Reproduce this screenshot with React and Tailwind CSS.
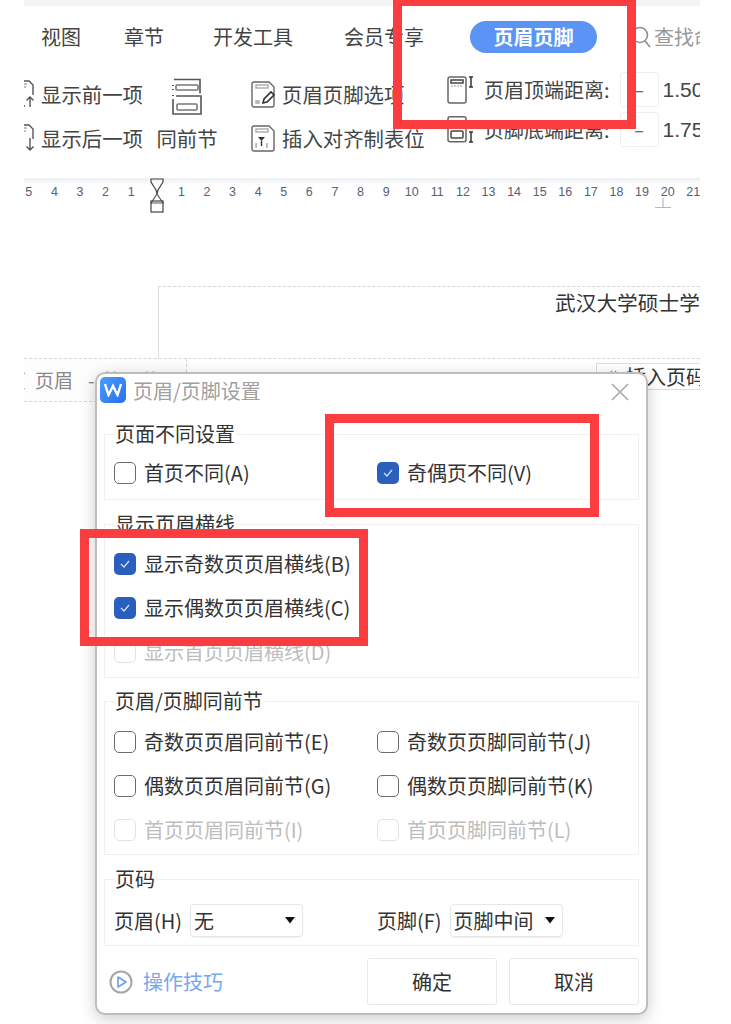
import React from 'react'

const cjk = 'font-["Noto_Sans_CJK_SC","Noto_Sans",sans-serif]'

function PrevIcon({ down }) {
  return (
    <svg width="17" height="28" viewBox="0 0 17 28" fill="none" stroke="#555" strokeWidth="1.4" className="shrink-0">
      <path d="M0 1h5l4 4v10" />
      <path d="M0 4h3M0 7h2" stroke="#aaa" />
      {down ? (
        <path d="M6 14v12M2.5 22.5L6 26l3.5-3.5" />
      ) : (
        <path d="M6 27V17M2.5 20.5L6 17l3.5 3.5M0 26h1" />
      )}
    </svg>
  )
}

function SameAsPrevIcon() {
  return (
    <svg width="30" height="38" viewBox="0 0 30 38" fill="none" stroke="#555" strokeWidth="1.6">
      <path d="M2 1.500h26v14" />
      <rect x="4" y="7" width="22" height="5" rx="1" stroke="#777" />
      <path d="M1 7v1M1 11v1M1 17v1" strokeWidth="2" />
      <path d="M1 21v15h28V18H4" />
      <rect x="5" y="26" width="20" height="6" rx="1" stroke="#777" />
    </svg>
  )
}

function OptionsIcon() {
  return (
    <svg width="25" height="27" viewBox="0 0 25 27" fill="none" stroke="#666" strokeWidth="1.4">
      <path d="M3 1h15l5 5v18a2 2 0 0 1-2 2H3a2 2 0 0 1-2-2V3a2 2 0 0 1 2-2z" />
      <rect x="5" y="4" width="12" height="3" stroke="#aaa" />
      <path d="M5 20h3v2H5z" stroke="#aaa" />
      <path d="M12 22l1-4 7-7 3 3-7 7z" fill="#fff" stroke="#333" strokeWidth="1.6" />
    </svg>
  )
}

function AlignTabIcon() {
  return (
    <svg width="25" height="27" viewBox="0 0 25 27" fill="none" stroke="#666" strokeWidth="1.4">
      <path d="M3 1h15l5 5v18a2 2 0 0 1-2 2H3a2 2 0 0 1-2-2V3a2 2 0 0 1 2-2z" />
      <rect x="5" y="4" width="12" height="3" stroke="#aaa" />
      <path d="M7 12h7l-3.500 4z" fill="#333" stroke="none" />
      <path d="M10.500 16v5" stroke="#333" />
      <path d="M6 19H5v3h1M15 19h1v3h-1" stroke="#aaa" />
    </svg>
  )
}

function HeaderTopIcon() {
  return (
    <svg width="28" height="28" viewBox="0 0 28 28" fill="none" stroke="#666" strokeWidth="1.5" className="shrink-0">
      <rect x="1" y="1" width="18" height="26" rx="2" />
      <rect x="4" y="4" width="12" height="3" stroke="#444" />
      <path d="M4 10h12" stroke="#bbb" strokeDasharray="2 1" />
      <path d="M22 1h4M24 1v10M22 11h4" stroke="#333" />
    </svg>
  )
}

function FooterBottomIcon() {
  return (
    <svg width="28" height="27" viewBox="0 0 28 27" fill="none" stroke="#666" strokeWidth="1.5" className="shrink-0">
      <rect x="1" y="0.800" width="18" height="25" rx="2" />
      <rect x="4" y="15" width="12" height="7" rx="1" stroke="#444" />
      <path d="M4 11h12" stroke="#bbb" strokeDasharray="2 1" />
      <path d="M22 16h4M24 16v10M22 26h4" stroke="#333" />
    </svg>
  )
}

function RulerMarker() {
  return (
    <svg width="14" height="35" viewBox="0 0 14 35" fill="none" stroke="#444" strokeWidth="1.200">
      <path d="M1 1h12v3L8 12l-1 4-1-4-5-8z" />
      <path d="M7 16l6 9H1z" stroke="#555" />
      <rect x="1" y="23" width="12" height="11" />
    </svg>
  )
}

function Check({ checked, disabled }) {
  if (checked) {
    return (
      <span className="flex h-[22px] w-[22px] shrink-0 items-center justify-center rounded-[5px] bg-[#2a5fbe]">
        <svg width="10" height="8" viewBox="0 0 10 8" fill="none" stroke="#cfe0ff" strokeWidth="1.200">
          <path d="M1 4l3 3 5-6" />
        </svg>
      </span>
    )
  }
  return (
    <span
      className={`h-[22px] w-[22px] shrink-0 rounded-[5px] border-[1.5px] bg-white ${
        disabled ? 'border-[#e3e3e3]' : 'border-[#6b6b6b]'
      }`}
    />
  )
}

function Option({ label, checked, disabled }) {
  return (
    <div className={`flex h-[44px] items-center gap-[8px] whitespace-nowrap text-[20px] ${disabled ? 'text-[#bdbdbd]' : 'text-[#333]'}`}>
      <Check checked={checked} disabled={disabled} />
      <span>{label}</span>
    </div>
  )
}

function Group({ title, className, children }) {
  return (
    <fieldset className={`border border-[#f0f0f0] pl-[9px] ${className}`}>
      <legend className="h-[24px] px-[1px] text-[20px] leading-[24px] text-[#333]">{title}</legend>
      {children}
    </fieldset>
  )
}

function Select({ value, width }) {
  return (
    <div className={`flex h-[33px] items-center justify-between rounded-[4px] border border-[#e6e6e6] pl-[3px] pr-[5px] text-[20px] text-[#333] shadow-[0_1px_1px_rgba(0,0,0,0.06)] ${width}`}>
      <span>{value}</span>
      <svg width="12" height="7" viewBox="0 0 12 7" className="mr-[1px]">
        <path d="M1 0h10L6 6.500z" fill="#111" />
      </svg>
    </div>
  )
}

function Spinner({ value }) {
  return (
    <div className="ml-[10px] flex h-[35px] items-center">
      <div className="flex h-full w-[39px] shrink-0 items-center justify-center rounded-[3px] border border-[#eeeeee] text-[18px] text-[#666]">–</div>
      <span className="ml-[4px] font-['Liberation_Sans',sans-serif] text-[21px] text-[#444]">{value}</span>
    </div>
  )
}

const rulerLeft = [5, 4, 3, 2, 1]
const rulerRight = Array.from({ length: 21 }, (_, i) => i + 1)

function Ruler() {
  return (
    <div className="mt-[18px] h-[36px] bg-gradient-to-b from-[#eceef2] via-white via-[20%] to-white">
      <div className="ml-[-8px] flex h-[36px] items-start whitespace-nowrap pt-[5px] font-['Liberation_Sans',sans-serif] text-[12.500px] text-[#5a6072]">
        {rulerLeft.map((n) => (
          <span key={n} className="w-[25.600px] shrink-0 text-center">{n}</span>
        ))}
        <span className="mt-[-5px] flex w-[24.600px] shrink-0 justify-center pl-[2px]"><RulerMarker /></span>
        {rulerRight.map((n) => (
          <span key={n} className="relative w-[25.600px] shrink-0 text-center">
            {n}
            {n === 20 && (
              <svg width="16" height="10" viewBox="0 0 16 10" fill="none" stroke="#b5b8c0" strokeWidth="1.200" className="absolute left-0 top-[15px]">
                <path d="M8 0v9M0 9.500h16" />
              </svg>
            )}
          </span>
        ))}
      </div>
    </div>
  )
}

function Dialog() {
  return (
    <div className="absolute left-[95px] top-[372px] flex h-[643px] w-[553px] flex-col rounded-[10px] border-2 border-[#bdbdbd] bg-white px-[7px] shadow-[0_4px_16px_rgba(0,0,0,0.2)]">
      <div className="flex h-[48px] items-start pt-[3px]">
        <div className="ml-[-4px] flex h-[26px] w-[26px] items-center justify-center rounded-[5px] bg-gradient-to-br from-[#4a9dfb] to-[#2a6fef]">
          <svg width="18" height="14" viewBox="0 0 18 14" fill="none" stroke="#fff" strokeWidth="2.400">
            <path d="M1 1l3.500 11L9 3l4.500 9L17 1" />
          </svg>
        </div>
        <span className="ml-[7px] mt-[1px] text-[20px] leading-[26px] text-[#a0a0a0]">页眉/页脚设置</span>
        <svg width="18" height="18" viewBox="0 0 18 18" fill="none" stroke="#a8a8a8" strokeWidth="1.600" className="ml-auto mr-[10px] mt-[6px]">
          <path d="M1 1l16 16M17 1L1 17" />
        </svg>
      </div>

      <Group title="页面不同设置" className="pt-[5px] pb-[4px]">
        <div className="grid grid-cols-[263px_1fr]">
          <Option label="首页不同(A)" />
          <Option label="奇偶页不同(V)" checked />
        </div>
      </Group>

      <Group title="显示页眉横线" className="mt-[12px] pt-[6px] pb-[3px]">
        <Option label="显示奇数页页眉横线(B)" checked />
        <Option label="显示偶数页页眉横线(C)" checked />
        <Option label="显示首页页眉横线(D)" disabled />
      </Group>

      <Group title="页眉/页脚同前节" className="mt-[11px] pt-[7px] pb-[2px]">
        <div className="grid grid-cols-[263px_1fr]">
          <Option label="奇数页页眉同前节(E)" />
          <Option label="奇数页页脚同前节(J)" />
          <Option label="偶数页页眉同前节(G)" />
          <Option label="偶数页页脚同前节(K)" />
          <Option label="首页页眉同前节(I)" disabled />
          <Option label="首页页脚同前节(L)" disabled />
        </div>
      </Group>

      <Group title="页码" className="mt-[12px] pt-[13px] pb-[8px]">
        <div className="grid grid-cols-[263px_1fr] text-[20px] text-[#333]">
          <div className="flex items-center gap-[8px]">
            <span>页眉(H)</span>
            <Select value="无" width="w-[113px]" />
          </div>
          <div className="flex items-center gap-[8px]">
            <span>页脚(F)</span>
            <Select value="页脚中间" width="w-[113px]" />
          </div>
        </div>
      </Group>

      <div className="mt-[12px] flex items-center">
        <svg width="24" height="24" viewBox="0 0 24 24" fill="none" className="ml-[5px]">
          <circle cx="12" cy="12" r="10.500" stroke="#a5a5a5" strokeWidth="2" />
          <path d="M9 7l8 5-8 5z" stroke="#6d9eee" strokeWidth="1.600" strokeLinejoin="round" />
        </svg>
        <span className="ml-[10px] text-[20px] text-[#78a6ee]">操作技巧</span>
        <button className="ml-auto h-[47px] w-[130px] rounded-[3px] border border-[#e8e8e8] text-[20px] text-[#333]">确定</button>
        <button className="ml-[12px] h-[47px] w-[130px] rounded-[3px] border border-[#e8e8e8] text-[20px] text-[#333]">取消</button>
      </div>
    </div>
  )
}

export default function App() {
  return (
    <div className={`relative h-[1024px] w-[731px] overflow-hidden bg-white ${cjk}`}>
      <div className="ml-[24px] h-full w-[676px] overflow-hidden">
        <div className="h-[6px] bg-[#f3f4f6]" />

        {/* Tabs */}
        <div className="mt-[15px] flex h-[32px] items-center whitespace-nowrap pl-[17px] text-[20px] text-[#444]">
          <span>视图</span>
          <span className="ml-[43px]">章节</span>
          <span className="ml-[49px]">开发工具</span>
          <span className="ml-[51px]">会员专享</span>
          <span className="ml-[46px] flex h-[32px] w-[127px] shrink-0 items-center justify-center rounded-full bg-[#5b94f5] font-bold text-white">页眉页脚</span>
          <svg width="20" height="22" viewBox="0 0 20 22" fill="none" stroke="#8a8f98" strokeWidth="1.600" className="ml-[34px] shrink-0">
            <circle cx="9" cy="9" r="7.500" />
            <path d="M14 15l5 6" />
          </svg>
          <span className="ml-[3px] text-[#999]">查找命令</span>
        </div>

        {/* Ribbon */}
        <div className="mt-[19px] flex h-[88px] whitespace-nowrap text-[20.400px] text-[#444]">
          <div className="w-[133px] shrink-0">
            <div className="flex h-[44px] items-center"><PrevIcon /><span>显示前一项</span></div>
            <div className="flex h-[44px] items-center"><PrevIcon down /><span>显示后一项</span></div>
          </div>
          <div className="w-[60px] shrink-0">
            <div className="flex h-[44px] items-end justify-center"><SameAsPrevIcon /></div>
            <div className="flex h-[44px] items-center justify-center">同前节</div>
          </div>
          <div className="ml-[34px] w-[196px] shrink-0">
            <div className="flex h-[44px] items-center gap-[6px]"><OptionsIcon /><span>页眉页脚选项</span></div>
            <div className="flex h-[44px] items-center gap-[6px]"><AlignTabIcon /><span>插入对齐制表位</span></div>
          </div>
          <div className="flex flex-col gap-[5px] text-[20px]">
            <div className="flex h-[35px] items-center">
              <HeaderTopIcon />
              <span className="ml-[9px]">页眉顶端距离:</span>
              <Spinner value="1.50" />
            </div>
            <div className="flex h-[35px] items-center">
              <FooterBottomIcon />
              <span className="ml-[9px]">页脚底端距离:</span>
              <Spinner value="1.75" />
            </div>
          </div>
        </div>

        <Ruler />

        {/* Document header area */}
        <div className="ml-[134px] mt-[72px] h-[72px] border-l border-t border-dashed border-l-[#dcdcdc] border-t-[#d5d5d5] [border-left-style:solid]">
          <div className="whitespace-nowrap pl-[396px] pt-[2px] font-['Liberation_Serif','Noto_Sans_CJK_SC',serif] text-[20.700px] text-[#333]">武汉大学硕士学位论文</div>
        </div>
        <div className="flex h-[44px] items-start border-t border-dashed border-[#d5d5d5] text-[#888]">
          <div className="flex h-[43px] w-[163px] shrink-0 items-center overflow-hidden whitespace-nowrap border-b border-r border-dashed border-[#d5d5d5] bg-[#fdfdfd] text-[19px]">
            <span className="ml-[-17px]">页</span>
            <span className="ml-[9px]">页眉</span>
            <span className="ml-[15px]">-</span>
            <span className="ml-[8px]">第 1 节 -</span>
          </div>
          <div className="ml-[409px] mt-[4px] flex h-[27px] flex-1 items-center whitespace-nowrap border border-[#dddddd] pl-[10px] text-[20px] text-[#333]">
            <span className="mr-[8px] text-[#5b7fd8]">#</span>插入页码
          </div>
        </div>
      </div>

      <Dialog />

      {/* Red annotation boxes */}
      <div className="absolute left-[393px] top-[-3px] h-[132px] w-[243px] border-[9px] border-[#fc3d40]" />
      <div className="absolute left-[325px] top-[414px] h-[103px] w-[274px] border-[9px] border-[#fc3d40]" />
      <div className="absolute left-[80px] top-[529px] h-[117px] w-[288px] border-[9px] border-[#fc3d40]" />
    </div>
  )
}
